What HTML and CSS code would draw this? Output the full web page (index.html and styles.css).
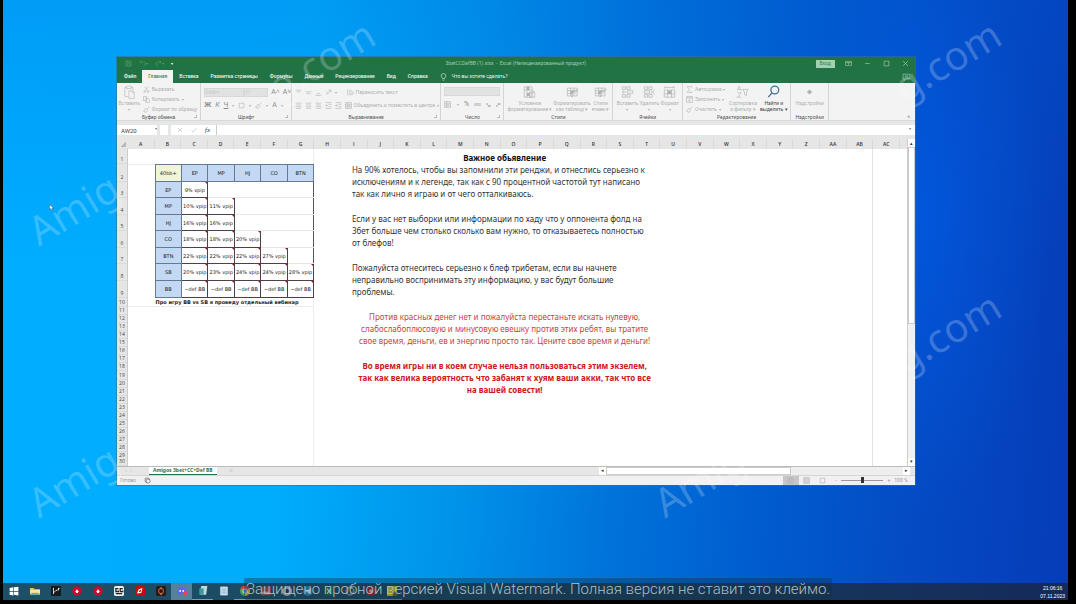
FILE: index.html
```html
<!DOCTYPE html>
<html lang="ru">
<head>
<meta charset="utf-8">
<title>Excel</title>
<link rel="stylesheet" href="styles.css">
</head>
<body>
<svg class="defs" aria-hidden="true">
  <symbol id="save" viewBox="0 0 12 12"><path d="M1.5 1.5h8l1 1v8h-9zM3.5 1.5v3h5v-3M3.5 10.500v-4h5v4"/></symbol>
  <symbol id="undo" viewBox="0 0 12 12"><path d="M4 1 1.500 3.500 4 6M1.500 3.500H7a3.500 3.500 0 0 1 0 7"/></symbol>
  <symbol id="redo" viewBox="0 0 12 12"><path d="M8 1l2.500 2.500L8 6M10.500 3.500H5a3.500 3.500 0 0 0 0 7"/></symbol>
  <symbol id="bulb" viewBox="0 0 12 14"><path d="M4 10V8.500C2.500 7.500 2 6.500 2 5a4 4 0 0 1 8 0c0 1.500-.5 2.500-2 3.500V10zM4.500 12.500h3"/></symbol>
  <symbol id="paste" viewBox="0 0 20 24"><path d="M5 4H2v16h6M13 4h3v5M5 2h3l1-1 1 1h3v4H5zM9 10h6l3 3v10H9zM15 10v3h3"/></symbol>
  <symbol id="cut" viewBox="0 0 12 12"><path d="M3 1l5 7M9 1 4 8"/><circle cx="3" cy="9.500" r="1.500"/><circle cx="9" cy="9.500" r="1.500"/></symbol>
  <symbol id="copy" viewBox="0 0 12 12"><path d="M1 1h5v7H1zM5 4h4l2 2v5H5z"/></symbol>
  <symbol id="brush" viewBox="0 0 12 12"><path d="M11 1 7 5M5 4l3 3-3 4-4-2z"/></symbol>
  <symbol id="lines" viewBox="0 0 12 12"><path d="M1 2h10M2 5h8M1 8h10M2 11h8"/></symbol>
  <symbol id="top" viewBox="0 0 12 12"><path d="M1 2h10M3 5h6"/></symbol>
  <symbol id="mid" viewBox="0 0 12 12"><path d="M1 5h10M3 8h6"/></symbol>
  <symbol id="bot" viewBox="0 0 12 12"><path d="M3 8h6M1 11h10"/></symbol>
  <symbol id="indent" viewBox="0 0 12 12"><path d="M1 1h10M6 4h5M6 8h5M1 11h10M5 6H1l2-2M1 6l2 2"/></symbol>
  <symbol id="orient" viewBox="0 0 12 12"><path d="M2 10 10 2M10 2v4M10 2H6M2 4l4 4"/></symbol>
  <symbol id="wrap" viewBox="0 0 12 12"><path d="M1 1v10M3 2h5M3 5h6a2 2 0 0 1 0 4H4l2-2M4 9l2 2"/></symbol>
  <symbol id="merge" viewBox="0 0 12 12"><path d="M1 1h10v10H1zM1 4h10M1 8h10M3 6h6M5 1v3M5 8v3"/></symbol>
  <symbol id="grid" viewBox="0 0 20 20"><path d="M2 2h16v16H2zM2 7h16M2 12h16M7 2v16M12 2v16"/></symbol>
  <symbol id="cond" viewBox="0 0 20 20"><path d="M2 2h12v16H2zM2 7h12M6 2v16M6 12h8M17 8l-6 9M10 10h8v8h-8z"/><path class="tint" d="M6 2h4v5H6zM6 12h4v4H6z"/></symbol>
  <symbol id="style" viewBox="0 0 20 20"><path d="M2 4h15v12H2zM2 8h15M2 12h9M7 4v12M12 4v6M19 5l-6 8-4 5 1-5 6-7"/><path class="tint" d="M7 8h7l-5 6H7z"/></symbol>
  <symbol id="insert" viewBox="0 0 20 20"><path d="M2 2h5v4H2zM9 2h5v4H9zM2 14h5v4H2zM9 14h5v4H9zM10 8h8v4h-8zM8 10H2l3-3M2 10l3 3"/></symbol>
  <symbol id="delete" viewBox="0 0 20 20"><path d="M2 2h5v4H2zM9 2h5v4H9zM2 14h5v4H2zM9 14h5v4H9zM2 8h8v4H2zM11 6l7 8M18 6l-7 8"/></symbol>
  <symbol id="format" viewBox="0 0 20 20"><path d="M3 1v4M17 1v4M3 3h14M2 7h16v11H2zM7 7v11M13 7v11M2 13h16"/><path class="tint" d="M7 8h6v5H7z"/></symbol>
  <symbol id="sigma" viewBox="0 0 12 12"><path d="M10 3V1H2l4 5-4 5h8V9"/></symbol>
  <symbol id="fill" viewBox="0 0 12 12"><path d="M1 1h10v10H1zM1 3h10M6 4v5M4 7l2 2 2-2"/></symbol>
  <symbol id="sort" viewBox="0 0 20 20"><path d="M2 8l3-7 3 7M3 6h4M2 11h6l-6 7h6M10 6h9l-3 4v6l-3-2v-4z"/></symbol>
  <symbol id="find" viewBox="0 0 20 20"><circle cx="12" cy="7" r="6"/><path d="M8 11l-6 7"/></symbol>
  <symbol id="gem" viewBox="0 0 20 20"><path class="tint" d="M10 6l4 4-4 4-4-4z"/></symbol>
  <symbol id="close" viewBox="0 0 12 12"><path d="M2 2l8 8M10 2l-8 8"/></symbol>
  <symbol id="check" viewBox="0 0 12 12"><path d="M1 7l3 3 7-8"/></symbol>
  <symbol id="dash" viewBox="0 0 12 12"><path d="M2 6h8"/></symbol>
  <symbol id="box" viewBox="0 0 12 12"><path d="M2 2h8v8H2z"/></symbol>
  <symbol id="ribbonbox" viewBox="0 0 14 12"><path d="M1 2h12v8H1zM1 4h12M7 9V6M5 7l2-2 2 2"/></symbol>
  <symbol id="comment" viewBox="0 0 14 14"><path d="M1 2h12v8H6l-3 3v-3H1zM4 5h6M4 7h6"/></symbol>
  <symbol id="rec" viewBox="0 0 12 12"><path d="M2 2h6l2 3M2 2v6l3 2"/><circle cx="7" cy="7" r="3.500"/></symbol>
  <symbol id="page" viewBox="0 0 12 12"><path d="M1 1h10v10H1zM3 3h6v6H3zM4 5h4M4 7h4"/></symbol>
</svg>

<main class="screen">
  <div class="desktop">
    <section class="window">
      <header class="titlebar">
        <div class="quick">
          <button aria-label="Сохранить"><svg><use href="#save"/></svg></button>
          <button aria-label="Отменить"><svg><use href="#undo"/></svg><i>▾</i></button>
          <button aria-label="Вернуть"><svg><use href="#redo"/></svg><i>▾</i></button>
          <button class="bright" aria-label="Настройка"><i>▾</i></button>
        </div>
        <h1>3betCCDefBB (1).xlsx &nbsp;-&nbsp; Excel (Нелицензированный продукт)</h1>
        <div class="winbtns">
          <button class="login">Вход</button>
          <button aria-label="Лента"><svg><use href="#ribbonbox"/></svg></button>
          <button aria-label="Свернуть"><svg><use href="#dash"/></svg></button>
          <button aria-label="Развернуть"><svg><use href="#box"/></svg></button>
          <button aria-label="Закрыть"><svg><use href="#close"/></svg></button>
        </div>
      </header>
      <nav class="tabs">
        <button>Файл</button><button class="on">Главная</button><button>Вставка</button><button>Разметка страницы</button><button>Формулы</button><button>Данные</button><button>Рецензирование</button><button>Вид</button><button>Справка</button>
        <button class="tell"><svg><use href="#bulb"/></svg>Что вы хотите сделать?</button>
        <button class="note" aria-label="Примечания"><svg><use href="#comment"/></svg></button>
      </nav>

      <div class="ribbon">
        <section class="group g-clip">
          <div class="tools">
            <button class="big"><svg><use href="#paste"/></svg>Вставить<i>▾</i></button>
            <div class="stack">
              <button><svg><use href="#cut"/></svg>Вырезать</button>
              <button><svg><use href="#copy"/></svg>Копировать <i>▾</i></button>
              <button><svg><use href="#brush"/></svg>Формат по образцу</button>
            </div>
          </div>
          <h2>Буфер обмена</h2><span class="corner"></span>
        </section>
        <section class="group g-font">
          <div class="tools rows">
            <div class="line"><select class="family" aria-label="Шрифт"><option>Calibri</option></select><select class="size" aria-label="Размер"><option>11</option></select><button class="ltr">A˄</button><button class="ltr">A˅</button></div>
            <div class="line wide"><button class="ltr"><b>Ж</b></button><button class="ltr"><em>К</em></button><button class="ltr"><u>Ч</u></button><i>▾</i><button aria-label="Границы"><svg><use href="#box"/></svg></button><i>▾</i><button aria-label="Заливка"><svg><use href="#brush"/></svg></button><i>▾</i><button class="ltr">А</button><i>▾</i></div>
          </div>
          <h2>Шрифт</h2><span class="corner"></span>
        </section>
        <section class="group g-align">
          <div class="tools rows">
            <div class="line"><button aria-label="Верх"><svg><use href="#top"/></svg></button><button aria-label="Середина"><svg><use href="#mid"/></svg></button><button aria-label="Низ"><svg><use href="#bot"/></svg></button><button aria-label="Ориентация"><svg><use href="#orient"/></svg></button><i>▾</i><button class="second"><svg><use href="#wrap"/></svg>Переносить текст</button></div>
            <div class="line"><button aria-label="Слева"><svg><use href="#lines"/></svg></button><button aria-label="Центр"><svg><use href="#lines"/></svg></button><button aria-label="Справа"><svg><use href="#lines"/></svg></button><button aria-label="Меньше"><svg><use href="#indent"/></svg></button><button aria-label="Больше"><svg><use href="#indent"/></svg></button><button><svg><use href="#merge"/></svg>Объединить и поместить в центре <i>▾</i></button></div>
          </div>
          <h2>Выравнивание</h2><span class="corner"></span>
        </section>
        <section class="group g-num">
          <div class="tools rows">
            <select class="numfmt" aria-label="Формат"><option> </option></select>
            <div class="line spread"><button aria-label="Валюта"><svg><use href="#merge"/></svg></button><i>▾</i><button class="ltr">%</button><button class="ltr small">000</button><button class="ltr small">⁰₀₀</button><button class="ltr small">₀⁰⁰</button></div>
          </div>
          <h2>Число</h2><span class="corner"></span>
        </section>
        <section class="group g-style">
          <div class="tools around">
            <button class="big"><svg><use href="#cond"/></svg>Условное<br>форматирование ▾</button>
            <button class="big"><svg><use href="#style"/></svg>Форматировать<br>как таблицу ▾</button>
            <button class="big"><svg><use href="#style"/></svg>Стили<br>ячеек ▾</button>
          </div>
          <h2>Стили</h2>
        </section>
        <section class="group g-cell">
          <div class="tools around">
            <button class="big"><svg><use href="#insert"/></svg>Вставить<i>▾</i></button>
            <button class="big"><svg><use href="#delete"/></svg>Удалить<i>▾</i></button>
            <button class="big"><svg><use href="#format"/></svg>Формат<i>▾</i></button>
          </div>
          <h2>Ячейки</h2>
        </section>
        <section class="group g-edit">
          <div class="tools between">
            <div class="stack">
              <button><svg><use href="#sigma"/></svg>Автосумма <i>▾</i></button>
              <button><svg><use href="#fill"/></svg>Заполнить <i>▾</i></button>
              <button><svg><use href="#brush"/></svg>Очистить <i>▾</i></button>
            </div>
            <button class="big"><svg><use href="#sort"/></svg>Сортировка<br>и фильтр ▾</button>
            <button class="big active"><svg><use href="#find"/></svg>Найти и<br>выделить ▾</button>
          </div>
          <h2>Редактирование</h2>
        </section>
        <section class="group g-add">
          <div class="tools around"><button class="big"><svg><use href="#gem"/></svg>Надстройки</button></div>
          <h2>Надстройки</h2>
        </section>
        <div class="collapse">˄</div>
      </div>

      <div class="formula">
        <label class="namebox"><input aria-label="Имя ячейки" value="AW20"><i>▾</i></label>
        <div class="fx"><svg><use href="#close"/></svg><svg><use href="#check"/></svg><em>fx</em></div>
        <input class="expr" aria-label="Строка формул">
        <i>▾</i>
      </div>

      <div class="book">
        <div class="corner-cell"></div>
        <div class="cols">
          <span>A</span><span>B</span><span>C</span><span>D</span><span>E</span><span>F</span><span>G</span><span>H</span><span>I</span><span>J</span><span>K</span><span>L</span><span>M</span><span>N</span><span>O</span><span>P</span><span>Q</span><span>R</span><span>S</span><span>T</span><span>U</span><span>V</span><span>W</span><span>X</span><span>Y</span><span>Z</span><span>AA</span><span>AB</span><span>AC</span>
        </div>
        <div class="rownums">
          <span>1</span><span>2</span><span>3</span><span>4</span><span>5</span><span>6</span><span>7</span><span>8</span><span>9</span><span>10</span><span>11</span><span>12</span><span>13</span><span>14</span><span>15</span><span>16</span><span>17</span><span>18</span><span>19</span><span>20</span><span>21</span><span>22</span><span>23</span><span>24</span><span>25</span><span>26</span><span>27</span><span>28</span><span>29</span><span>30</span>
        </div>
        <div class="cells">
          <div class="pane-left"></div><div class="pane-right"></div><div class="pane-top"></div>
          <table class="range">
            <tr><th class="stack-size">40bb+</th><th>EP</th><th>MP</th><th>HJ</th><th>CO</th><th>BTN</th></tr>
            <tr><th>EP</th><td>9% vpip</td><td class="e"></td><td class="e"></td><td class="e"></td><td class="e"></td></tr>
            <tr><th>MP</th><td>10% vpip</td><td>11% vpip</td><td class="e"></td><td class="e"></td><td class="e"></td></tr>
            <tr><th>HJ</th><td>16% vpip</td><td>16% vpip</td><td class="e"></td><td class="e"></td><td class="e"></td></tr>
            <tr><th>CO</th><td>18% vpip</td><td>18% vpip</td><td>20% vpip</td><td class="e"></td><td class="e"></td></tr>
            <tr><th>BTN</th><td>22% vpip</td><td>22% vpip</td><td>22% vpip</td><td>27% vpip</td><td class="e"></td></tr>
            <tr><th>SB</th><td>20% vpip</td><td>23% vpip</td><td>24% vpip</td><td>24% vpip</td><td>28% vpip</td></tr>
            <tr><th>BB</th><td>~def BB</td><td>~def BB</td><td>~def BB</td><td>~def BB</td><td>~def BB</td></tr>
          </table>
          <p class="webinar">Про игру BB vs SB я проведу отдельный вебинар</p>
          <article class="notice">
            <h3>Важное обьявление</h3>
            <p>На 90% хотелось, чтобы вы запомнили эти ренджи, и отнеслись серьезно к<br>исключениям и к легенде, так как с 90 процентной частотой тут написано<br>так как лично я играю и от чего отталкиваюсь.</p>
            <p>Если у вас нет выборки или информации по хаду что у оппонента фолд на<br>3бет больше чем столько сколько вам нужно, то отказываетесь полностью<br>от блефов!</p>
            <p>Пожалуйста отнеситесь серьезно к блеф трибетам, если вы начнете<br>неправильно воспринимать эту информацию, у вас будут большие<br>проблемы.</p>
            <p class="red">Против красных денег нет и пожалуйста перестаньте искать нулевую,<br>слабослабоплюсовую и минусовую евешку против этих ребят, вы тратите<br>свое время, деньги, ев и энергию просто так. Цените свое время и деньги!</p>
            <p class="red strong">Во время игры ни в коем случае нельзя пользоваться этим экзелем,<br>так как велика вероятность что забанят к хуям ваши акки, так что все<br>на вашей совести!</p>
          </article>
        </div>
        <div class="vscroll"><button aria-label="Вверх">▴</button><div class="thumb"></div><div class="track"></div><button aria-label="Вниз">▾</button></div>
      </div>

      <div class="sheets">
        <span class="arrows">‹ &nbsp; ›</span>
        <button class="sheet">Amigos 3bet+CC+Def BB</button>
        <span class="plus">⊕</span>
        <div class="hscroll"><button aria-label="Влево">◂</button><div class="thumb"></div><div class="track"></div><button aria-label="Вправо">▸</button></div>
      </div>
      <footer class="status">
        <span>Готово</span><svg class="rec"><use href="#rec"/></svg>
        <div class="views"><button class="on" aria-label="Обычный"><svg><use href="#grid"/></svg></button><button aria-label="Разметка"><svg><use href="#page"/></svg></button><button aria-label="Страничный"><svg><use href="#box"/></svg></button></div>
        <span>−</span><input type="range" min="0" max="100" value="50" aria-label="Масштаб"><span>+</span><span class="pct">100 %</span>
      </footer>
    </section>

    <svg class="pointer" viewBox="0 0 10 14"><path d="M1 1v10l3-2 2 4 2-1-2-4h3z"/></svg>
    <div class="mark m1"><span>Amig</span><span>g.com</span></div>
    <div class="mark m2"><span></span><span>g.com</span></div>
    <div class="mark m3"><span>Amig</span><span></span></div>
    <div class="mark m4"><span>Amig</span><span>g.com</span></div>
  </div>

  <footer class="taskbar">
    <button aria-label="Пуск"><svg viewBox="0 0 16 16"><path fill="#fff" d="M1 3l6-1v6H1zM8 2l7-1v7H8zM1 9h6v6l-6-1zM8 9h7v6l-7-1z"/></svg></button>
    <button aria-label="Проводник"><svg viewBox="0 0 16 16"><path fill="#e8b850" d="M0 3h6l1 2h9v9H0z"/><path fill="#fbe69a" d="M0 6h16v5H0z"/><path fill="#58a8d8" d="M3 11h10v3H3z"/></svg></button>
    <button aria-label="Трекер"><svg viewBox="0 0 16 16"><path fill="#161a1c" d="M0 0h16v16H0z"/><path fill="none" stroke="#ddd" stroke-width="1.500" d="M4 3v10M4 11l4-4h2l4-4M12 3v4"/></svg></button>
    <button aria-label="Покер"><svg viewBox="0 0 16 16"><circle cx="8" cy="8" r="7.500" fill="#c80c2c"/><path fill="#fff" d="M8 5l3 4-2 1 1 1H6l1-1-2-1z"/></svg></button>
    <button aria-label="Покер 2"><svg viewBox="0 0 16 16"><circle cx="8" cy="8" r="7.500" fill="#c80c2c"/><path fill="#fff" d="M8 5l3 4-2 1 1 1H6l1-1-2-1z"/></svg></button>
    <button aria-label="GG"><svg viewBox="0 0 16 16"><rect width="16" height="16" rx="3" fill="#eee"/><path fill="none" stroke="#222" stroke-width="2" d="M7 4H3v5h4V7M14 4h-4v5h4V7M3 12h10"/></svg></button>
    <button aria-label="Игра"><svg viewBox="0 0 16 16"><rect width="16" height="16" rx="3" fill="#c40c10"/><path fill="#fff" d="M12 3 6 5l-3 7 7-1z"/><path fill="#c40c10" d="M10 6 7 7 6 10l3-1z"/></svg></button>
    <button aria-label="Чип"><svg viewBox="0 0 16 16"><rect width="16" height="16" rx="3" fill="#241a18"/><circle cx="8" cy="8" r="4" fill="none" stroke="#b84a34" stroke-width="2"/><path fill="#e88060" d="M8 1l2 3H6zM8 15l2-3H6z"/></svg></button>
    <button class="current" aria-label="Discord"><svg viewBox="0 0 16 16"><path fill="#5966ef" d="M3 2h10l3 10-4 2-2-2H6l-2 2-4-2z"/><circle cx="5" cy="8" r="1.500" fill="#fff"/><circle cx="10" cy="8" r="1.500" fill="#fff"/><circle cx="13" cy="12" r="3.500" fill="#ef4050"/></svg></button>
    <button class="open" aria-label="Блокнот 1"><svg viewBox="0 0 16 16"><path fill="#b8dce0" d="M5 0h10l-2 14H3z"/><path fill="#3f969c" d="M2 4h7v10H2z"/></svg></button>
    <button aria-label="Блокнот"><svg viewBox="0 0 16 16"><path fill="#c8e4f4" d="M2 1h12v14H2z"/><path stroke="#7096b0" d="M4 5h8M4 8h8M4 11h8"/></svg></button>
    <button class="open" aria-label="Chrome"><svg viewBox="0 0 16 16"><circle cx="8" cy="8" r="8" fill="#42a552"/><path fill="#e44434" d="M8 8 1 4a8 8 0 0 1 14 0z"/><path fill="#f8c830" d="M8 8l7-4a8 8 0 0 1-7 12z"/><circle cx="8" cy="8" r="3.500" fill="#4888f0" stroke="#fff"/></svg></button>
    <button class="open" aria-label="Почта"><svg viewBox="0 0 16 16"><path fill="#c84838" d="M0 1h16v14H0z"/><path fill="#e6c8c4" d="M2 9h12v4H2z"/></svg></button>
    <button class="open" aria-label="Мяч"><svg viewBox="0 0 16 16"><circle cx="8" cy="8" r="8" fill="#cdd6da"/><path fill="#28343a" d="M8 4l4 3-2 4H6L4 7zM1 4l3-3v3zM12 14l3-3v2z"/></svg></button>
    <button class="open" aria-label="Telegram"><svg viewBox="0 0 16 16"><circle cx="8" cy="8" r="8" fill="#238fc8"/><path fill="#fff" d="M3 8l10-4-2 9-4-3z"/></svg></button>
    <button class="open" aria-label="Таблицы"><svg viewBox="0 0 16 16"><path fill="#167840" d="M1 1h14v14H1z"/><path stroke="#fff" stroke-width="2" d="M5 4l6 8M11 4l-6 8"/></svg></button>
    <button class="open" aria-label="Настройки"><svg viewBox="0 0 16 16"><circle cx="8" cy="8" r="6" fill="none" stroke="#8b9a9c" stroke-width="3"/></svg></button>
    <button class="open" aria-label="Запись"><svg viewBox="0 0 16 16"><circle cx="8" cy="8" r="8" fill="#b81c28"/><circle cx="8" cy="8" r="3" fill="#e8c8c8"/></svg></button>
    <button class="open" aria-label="Заметки"><svg viewBox="0 0 16 16"><path fill="#e8d020" d="M0 0h16v16H0z"/><path fill="#766c18" d="M9 9h7v7H9z"/></svg></button>
    <time>21:06:16<br>07.11.2023</time>
  </footer>
  <p class="trial">Защищено пробной версией Visual Watermark. Полная версия не ставит это клеймо.</p>
</main>
</body>
</html>
```

FILE: styles.css
```css
* { box-sizing: border-box; margin: 0; padding: 0; }
body { background: #000; font-family: Roboto, "Open Sans", sans-serif; color: #333; overflow: hidden; }
button, input, select { font: inherit; color: inherit; background: none; border: 0; border-radius: 0; outline: 0; appearance: none; min-width: 0; }
button { display: flex; align-items: center; justify-content: center; white-space: nowrap; }
svg { fill: none; stroke: currentColor; stroke-width: 1; flex: none; }
i { font-style: normal; font-size: 4px; }
.defs { position: absolute; width: 0; height: 0; }

.screen { position: relative; display: flex; flex-direction: column; height: 100vh; padding: 0 8px 4px 3px; }
.desktop {
  position: relative; flex: 1; overflow: hidden;
  background:
    radial-gradient(ellipse 12% 50% at 86% 38%, rgba(0, 96, 240, .5), transparent),
    linear-gradient(180deg, rgba(0, 90, 215, .2), transparent 45%),
    linear-gradient(95deg, #00adff 0, #00adfc 28%, #0094ea 44%, #0074da 58%, #005ccf 72%, #044ac3 86%, #063cb8 100%);
}

.window { position: absolute; left: 10.7%; top: 57px; width: 74.9%; height: 73.4%; display: flex; flex-direction: column; background: #e6e6e6; font-size: 5px; line-height: 7px; overflow: hidden; box-shadow: 0 0 0 1px rgba(60, 110, 130, .6); }

.titlebar { display: grid; grid-template-columns: 1fr auto 1fr; align-items: center; height: 13px; background: #217346; color: #86b599; }
.quick { display: flex; gap: 7px; padding-left: 8px; color: #5c9b78; }
.quick svg { width: 7px; height: 7px; }
.quick .bright { color: #fff; }
.titlebar h1 { font-size: 5px; font-weight: 400; color: #a3c9b1; }
.winbtns { display: flex; justify-content: flex-end; align-items: center; gap: 12px; padding-right: 6px; color: #b5d5c2; }
.winbtns svg { width: 7px; height: 7px; }
.winbtns .login { background: #a2d0b2; color: #39805a; width: 19px; height: 8px; margin-right: -2px; }

.tabs { display: flex; height: 13px; background: #217346; color: #eaf4ee; padding-left: 1px; font-weight: 500; }
.tabs button { padding: 0 6px; }
.tabs .on { background: #f3f3f3; color: #4d8365; }
.tabs .tell { gap: 5px; font-weight: 400; }
.tabs .tell svg { width: 7px; height: 8px; }
.tabs .note { margin-left: auto; padding: 0 4px; color: #a9d3b8; }
.note svg { width: 9px; height: 8px; }

.ribbon { display: flex; height: 38px; background: #f3f3f3; color: #b0b0b0; border-bottom: 1px solid #d9d9d9; }
.group { position: relative; display: flex; flex-direction: column; border-right: 1px solid #d4d4d4; padding: 2px 3px 0; min-width: 0; flex-basis: 0; }
.g-clip { flex-grow: 84; } .g-font { flex-grow: 91; } .g-align { flex-grow: 155; } .g-num { flex-grow: 61; }
.g-style { flex-grow: 111; } .g-cell { flex-grow: 68; } .g-edit { flex-grow: 110; } .g-add { flex-grow: 34; }
.group h2 { font-size: 5px; font-weight: 400; text-align: center; color: #555; line-height: 6px; }
.corner { position: absolute; right: 3px; bottom: 2px; width: 3px; height: 3px; border-right: 1px solid #bbb; border-bottom: 1px solid #bbb; }
.tools { display: flex; flex: 1; gap: 4px; align-items: flex-start; white-space: nowrap; min-height: 0; }
.tools svg { width: 7px; height: 7px; }
.tools.rows { flex-direction: column; gap: 3px; padding-top: 2px; }
.around { justify-content: space-around; gap: 1px; }
.between { justify-content: space-between; }
.stack { display: flex; flex-direction: column; gap: 2px; align-items: flex-start; }
.stack button { gap: 2px; height: 8px; }
.line { display: flex; align-items: center; gap: 3px; height: 10px; }
.line button { gap: 2px; }
.line .second { margin-left: 7px; }
.wide { gap: 4px; }
.spread { align-self: stretch; justify-content: space-between; }
.ltr { font-size: 7px; color: #8a8a8a; }
.ltr.small { font-size: 4px; }
.big { flex-direction: column; line-height: 6px; height: 29px; justify-content: flex-start; gap: 1px; }
.tools .big svg { width: 13px; height: 14px; }
.tint { fill: currentColor; stroke: none; }
.active { color: #444; }
.active svg { color: #40719c; stroke-width: 2; }
.family, .size, .numfmt { background: #e2e2e2; border: 1px solid #d8d8d8; height: 9px; color: #c8c8c8; font-size: 5px; }
.family { width: 40px; } .size { width: 24px; margin-left: -3px; } .numfmt { width: 100%; }
.collapse { flex: 84 1 0; display: flex; align-items: flex-end; justify-content: flex-end; padding: 0 4px; color: #777; font-size: 6px; }

.formula { display: flex; align-items: stretch; height: 10px; margin: 4px 0 4px; background: #fff; color: #777; }
.formula > i { padding-right: 4px; }
.namebox { display: flex; width: 43px; padding-left: 4px; font-size: 6px; border-right: 3px solid #e6e6e6; }
.namebox input { width: 34px; color: #444; }
.fx { display: flex; gap: 8px; align-items: center; padding: 0 6px; margin-left: 8px; border-left: 3px solid #e6e6e6; border-right: 1px solid #ccc; }
.fx svg { width: 6px; height: 6px; color: #aaa; }
.fx em { font: italic 7px "Liberation Serif", serif; color: #333; }
.expr { flex: 1; }

.book { flex: 1; min-height: 0; display: grid; grid-template: 10px minmax(0, 1fr) / 11px minmax(0, 1fr) 8px; font-family: "Open Sans", sans-serif; }
.corner-cell { background: linear-gradient(135deg, #e6e6e6 60%, #b8b8b8 60%); border: 2px solid #e6e6e6; }
.cols { display: grid; grid-template-columns: repeat(29, minmax(0, 80fr)) 20fr; text-align: center; line-height: 10px; color: #333; font-weight: 600; }
.cols span { border-right: 1px solid #d8d8d8; }
.rownums, .cells { display: grid; grid-template-rows: minmax(0, 153fr) minmax(0, 174fr) repeat(7, minmax(0, 166fr)) minmax(0, 93fr) repeat(19, minmax(0, 81fr)) minmax(0, 56fr); overflow: hidden; }
.rownums { color: #444; text-align: center; border-right: 1px solid #ccc; }
.rownums span { display: flex; align-items: flex-end; justify-content: center; line-height: 7px; border-bottom: 1px solid #dadada; }
.cells { grid-template-columns: repeat(29, minmax(0, 80fr)) 20fr; background: #fff; }
.pane-left { grid-area: 1 / 1 / 31 / 8; border-right: 1px solid #ececec; }
.pane-right { grid-area: 1 / 9 / 31 / 29; border-right: 1px solid #e2e2e2; }
.pane-top { grid-area: 2 / 1 / 11 / 8; border-top: 1px solid #ececec; border-bottom: 1px solid #ececec; }
.range { grid-area: 2 / 2 / 10 / 8; width: 100%; height: 100%; table-layout: fixed; border-collapse: collapse; border: 1px solid #555; font-family: "DejaVu Sans", sans-serif; font-size: 5px; line-height: 6px; text-align: center; color: #222; }
.range th { background: #c3d8f2; font-weight: 400; border: 1px solid #667990; }
.range .stack-size { background: #f1f5d8; }
.range td { position: relative; border: 1px solid #4d4147; white-space: nowrap; }
.range td::after { content: ""; position: absolute; right: 0; top: 0; border-left: 2px solid transparent; border-top: 2px solid #a01828; }
.range .e { border: 0 solid #e6e6e6; border-bottom-width: 1px; }
.range .e:last-child { border-right: 1px solid #555; }
.range .e::after { content: none; }
.webinar { grid-area: 10 / 2 / 11 / 9; font: 700 5px/8px "DejaVu Sans", sans-serif; color: #222; padding-left: 1px; white-space: nowrap; }
.notice { grid-area: 1 / 9 / 31 / 21; font-family: "Noto Sans", sans-serif; font-size: 8px; line-height: 12px; padding: 3px 3px 0 11px; white-space: nowrap; color: #333; }
.notice h3 { font-size: 8px; color: #111; text-align: center; }
.notice p { margin-bottom: 13px; }
.notice .red { color: #cf4040; text-align: center; }
.notice .strong { color: #cc1820; font-weight: 700; }

.vscroll { grid-area: 1 / 3 / 3 / 4; display: flex; flex-direction: column; background: #f1f1f1; border-left: 1px solid #ccc; }
.vscroll button, .hscroll button { background: #fff; color: #333; width: 7px; height: 8px; }
.thumb { background: #fff; border: 1px solid #ccc; }
.vscroll .thumb { flex: 176; } .vscroll .track { flex: 135; }

.sheets { display: flex; align-items: stretch; height: 9px; border-top: 1px solid #bbb; }
.arrows { width: 32px; padding-left: 8px; color: #bbb; }
.sheet { background: #fff; color: #2b7650; font-size: 5px; font-weight: 700; font-family: "Noto Sans", sans-serif; padding: 0 4px; border-bottom: 1px solid #217346; }
.plus { color: #ccc; padding-left: 12px; }
.hscroll { display: flex; margin-left: auto; width: 39%; background: #eee; margin-right: 5px; }
.hscroll .thumb { flex: 182; } .hscroll .track { flex: 110; }

.status { display: flex; align-items: center; gap: 4px; height: 10px; background: #f1f1f1; border-top: 1px solid #d5d5d5; color: #999; padding: 0 7px 0 3px; }
.status svg { width: 7px; height: 7px; }
.status .rec { color: #555; margin-left: 4px; }
.views { display: flex; margin-left: auto; align-self: stretch; }
.views button { width: 16px; color: #aaa; }
.views .on { background: #c6c6c6; }
.status input { width: 42px; height: 6px; background: linear-gradient(#999, #999) center / 100% 1px no-repeat; }
.status input::-webkit-slider-thumb { appearance: none; width: 3px; height: 6px; background: #333; }

.pointer { position: absolute; left: 46px; top: 204px; width: 5px; height: 7px; fill: #fff; stroke: #357; }
.mark { position: absolute; display: flex; justify-content: space-between; width: 396px; line-height: 48px; font-family: "Noto Sans", sans-serif; font-size: 40px; color: rgba(255, 255, 255, .22); transform: rotate(-31deg); pointer-events: none; }
.m1 { left: 0; top: 108px; } .m2 { left: 58.8%; top: 108px; }
.m3 { left: 0; top: 380px; } .m4 { left: 58.8%; top: 380px; }

.taskbar { display: flex; height: 17px; background: linear-gradient(90deg, #1d5066, #1b4a64 30%, #183c5c 60%, #152a5a); }
.taskbar button { width: 21px; border-bottom: 1px solid transparent; }
.taskbar svg { width: 10px; height: 10px; stroke: none; }
.taskbar .current { background: #56819c; }
.taskbar .open { border-bottom-color: #6fa5bd; }
.taskbar time { margin-left: auto; padding: 1px 3px 0 0; font-family: "Liberation Sans", sans-serif; font-size: 5px; line-height: 8px; color: #fff; text-align: center; }
.trial { position: absolute; left: 50%; bottom: 4px; transform: translateX(-50%); background: rgba(20, 50, 65, .4); color: #b0bec5; font-family: Roboto, sans-serif; font-weight: 300; font-size: 15px; line-height: 22px; padding: 0 2px; border-radius: 3px; white-space: nowrap; }
```
